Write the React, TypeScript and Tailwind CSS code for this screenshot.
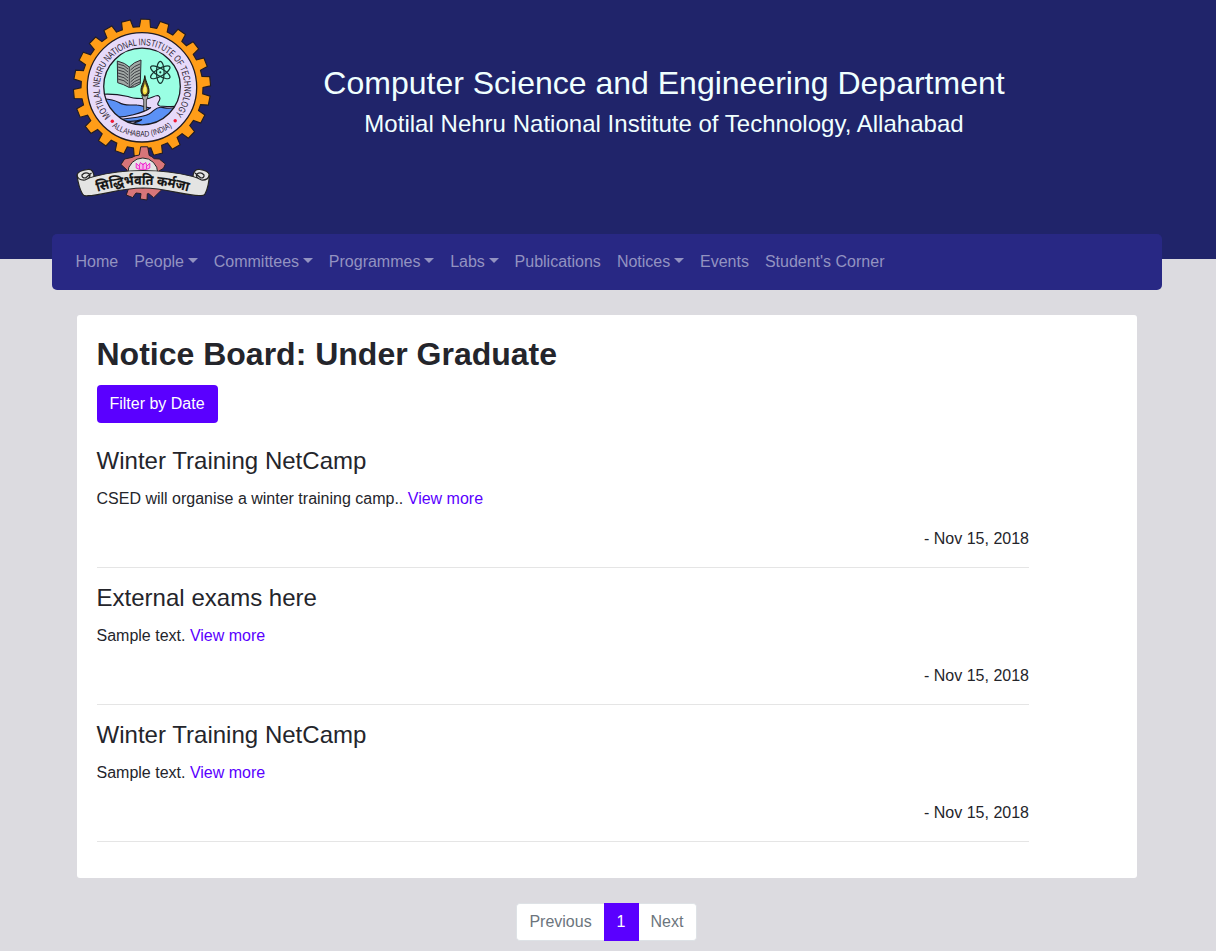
import React from "react";

const menu: { label: string; dropdown?: boolean }[] = [
  { label: "Home" },
  { label: "People", dropdown: true },
  { label: "Committees", dropdown: true },
  { label: "Programmes", dropdown: true },
  { label: "Labs", dropdown: true },
  { label: "Publications" },
  { label: "Notices", dropdown: true },
  { label: "Events" },
  { label: "Student's Corner" },
];

const notices = [
  { title: "Winter Training NetCamp", text: "CSED will organise a winter training camp..", date: "Nov 15, 2018" },
  { title: "External exams here", text: "Sample text.", date: "Nov 15, 2018" },
  { title: "Winter Training NetCamp", text: "Sample text.", date: "Nov 15, 2018" },
];

function gearPath(cx: number, cy: number, inner: number, outer: number, teeth: number, start: number, base: number, tip: number) {
  const points: string[] = [];
  const add = (r: number, deg: number) => {
    const a = (deg * Math.PI) / 180;
    points.push(`${(cx + r * Math.sin(a)).toFixed(2)},${(cy - r * Math.cos(a)).toFixed(2)}`);
  };
  for (let i = 0; i < teeth; i++) {
    const c = start + (i * 360) / teeth;
    add(inner, c - base);
    add(outer, c - tip);
    add(outer, c + tip);
    add(inner, c + base);
  }
  return `M${points.join("L")}Z`;
}

function Crest() {
  return (
    <svg className="block h-[188px] w-[144px]" viewBox="70 16 144 188" fill="none">
      <defs>
        <path id="ringTop" d="M110.8 116.2A42.4 42.4 0 1 1 174.3 115.2" />
        <path id="ringBottom" d="M100.3 113.8A49.4 49.4 0 0 0 183.7 113.8" />
        <path id="motto" d="M97.5 192Q142 177.5 189.5 192" />
        <clipPath id="scene"><circle cx="142" cy="86.5" r="38.3" /></clipPath>
      </defs>
      <path d={gearPath(142, 87.6, 61, 68.6, 22, 2.8, 5.2, 3.8)} fill="#ff9d18" stroke="#211c22" strokeWidth="1.1" />
      <circle cx="142" cy="87.3" r="54.7" fill="#e7dafa" stroke="#211c22" strokeWidth="1.3" />
      <circle cx="142" cy="86.5" r="38.3" fill="#9affe3" />
      <g clipPath="url(#scene)" stroke="#171725" strokeWidth="1.1">
        <path d="M102 94.3C112 93.5 121 95 128 96.5C133 99 139 98.3 146 98.6C151 99 154 95.3 158 95.5C161 97 160 100 158.5 102C156.5 105 159 106.5 163 106.3C170 106.5 176 108 184 104V134H100Z" fill="#e7dafa" />
        <path d="M100 98.6C108 99 114 100 119 102.5C125 106.5 131 104.6 137 105C143 105 147 109 151 107.5C145 112 138 113.5 132 115C127 116.5 122 117.5 116 117C108 112 104 105 100 98.6Z" fill="#5b91f6" />
        <path d="M119 120C128 117.5 141 118.2 149 114C154 111.5 155 107 161 107.2C166 108 171 110 180 106L176 130H124C126 123 137 123.5 142 119.5C132 123 124 121 119 120Z" fill="#5b91f6" />
      </g>
      <circle cx="142" cy="86.5" r="38.3" stroke="#1b1b22" strokeWidth="1.3" />
      <path d="M117.3 61Q125.5 63 129.3 67Q134 62 141 60L140.3 83.7Q134 88 129.3 87.5Q123 84 117.7 82.7Z" fill="#a2a9a6" stroke="#292b31" strokeWidth="1" />
      <path d="M129.3 67V87M118 64Q125 65 128 69M118 67Q125 68 128 72M118 70Q125 71 128 75M118 73Q125 74 128 78M118 76Q125 77 128 81M118 79Q125 80 128 84M130.5 70Q134 66 140 64M130.5 73Q134 69 140 67M130.5 76Q134 72 140 70M130.5 79Q134 75 140 73M130.5 82Q134 78 140 76M130.5 85Q134 81 140 79M130.5 87Q134 84 140 82" stroke="#292b31" strokeWidth=".85" />
      <g stroke="#17352f" strokeWidth="1.2">
        <ellipse cx="160.3" cy="72.3" rx="3.8" ry="11" />
        <ellipse cx="160.3" cy="72.3" rx="3.8" ry="11" transform="rotate(60 160.3 72.3)" />
        <ellipse cx="160.3" cy="72.3" rx="3.8" ry="11" transform="rotate(120 160.3 72.3)" />
        <circle cx="160.3" cy="72.3" r=".5" fill="#17352f" />
      </g>
      <path d="M141.8 95H148.2L147 99.5H146.4V110.5H143.7V99.5H143Z" fill="#aaa" stroke="#222" strokeWidth=".8" />
      <path d="M144.8 75.6C144 83 140.6 86 141 91Q141.5 96 145 96Q149.4 95 149 91C149 86 146 83 144.8 75.6Z" fill="#514321" stroke="#18180d" />
      <path d="M144.8 81C145 86 142.5 88 142.7 91Q143 94.5 145 94.5Q147.5 93.5 147.4 90C147.4 87 145 85 144.8 81Z" fill="#f2df43" />
      <path d="M145 87V92" stroke="#fff9ad" />
      <g fill="#29222f" fontFamily="'Liberation Sans', sans-serif" fontSize="9.6">
        <text>
          <textPath href="#ringTop" textLength="193" lengthAdjust="spacingAndGlyphs">MOTILAL NEHRU NATIONAL INSTITUTE OF TECHNOLOGY</textPath>
        </text>
        <text fontSize="8.2">
          <textPath href="#ringBottom" startOffset="50%" textAnchor="middle" textLength="64" lengthAdjust="spacingAndGlyphs">ALLAHABAD (INDIA)</textPath>
        </text>
      </g>
      <circle cx="112.3" cy="121.2" r="1.7" fill="#f21936" />
      <circle cx="175.2" cy="120.7" r="1.7" fill="#f21936" />
      <path d="M140.7 146.8H147.7L149.2 155.4Q152 156.4 154.2 158.7L159.3 159L165.4 164L163.5 168.3L159 171V187L161.5 190L153.7 197.7L148.7 193.5L147.3 193.8L147 200L140.3 199L141 193.6L136 193L132.7 197.6L126.2 195L128.7 188L127 184V170L121 164.5L124.6 159L132 157.4Q135 155.5 139.3 155Z" fill="#d87579" stroke="#241e25" strokeWidth="1" strokeLinejoin="round" />
      <circle cx="142.8" cy="173" r="15" fill="#e5e5e3" stroke="#252525" />
      <g stroke="#ef2bcf" strokeWidth="1">
        <path d="M136.2 163.2V168Q143 172 149.8 168V163.2L147 166L145.6 162.4L143 165L140.5 162.4L139 166Z" fill="#f4b4e8" />
        <path d="M143 163V170M139.5 166V169M146.5 166V169" />
      </g>
      <g fill="#e4e4e3" stroke="#242424" strokeWidth="1.2" strokeLinejoin="round">
        <path d="M77 175Q78 170.5 88 169.5Q93.5 169 94 176.5Q117 170.5 143 170.5Q169 170.5 193 176.5Q193.5 169 199.5 169.5Q208.5 170.5 209.3 175Q209 186 205 194Q204 196 199 195.5C184 195.5 166 188 143 188C120 188 102 195.5 88 195.7Q84 196.5 82.5 194Q78.5 187 77 175Z" />
        <path d="M77 175Q78 180.5 85 180Q91.5 177.5 89.5 174Q85 171.5 82 175Q81.5 178 85.5 178L91.5 173M94 176.5Q90 177.5 85 180M209.3 175Q208 180.5 201.5 180Q195 177.5 196.8 174Q201 171.5 204 175Q204.5 178 200.8 178L195 173M193 176.5Q196.5 177.5 201.5 180" fill="none" />
      </g>
      <text fill="#151515" stroke="#151515" strokeWidth=".15" fontFamily="'Noto Sans Devanagari', 'Noto Sans', FreeSans, sans-serif" fontWeight="700" fontSize="13.5">
        <textPath href="#motto" textLength="92" lengthAdjust="spacingAndGlyphs">सिद्धिर्भवति कर्मजा</textPath>
      </text>
    </svg>
  );
}

export default function App() {
  return (
    <div className="h-[951px] overflow-hidden bg-[#dcdbe0] font-['Liberation_Sans',Arial,sans-serif] text-base leading-6 text-[#24252b]">
      <header className="flex h-[259px] bg-[#20246a] pl-[70px] pt-4 text-[#f0ffff]">
        <Crest />
        <div className="ml-[65px] w-[770px] pt-12 text-center">
          <h1 className="text-[32px] leading-[38.4px]">Computer Science and Engineering Department</h1>
          <h2 className="mt-[7px] text-2xl leading-[29px] tracking-[0.02px]">Motilal Nehru National Institute of Technology, Allahabad</h2>
        </div>
      </header>

      <nav className="relative -mt-[25px] ml-[52px] flex h-14 w-[1110px] items-center rounded-[5px] bg-[#282884] pl-[15.5px] text-[#9393c1]">
        {menu.map(({ label, dropdown }) => (
          <a key={label} className="whitespace-nowrap px-2 py-2">
            {label}
            {dropdown && <span className="ml-[3.74px] inline-block border-x-[5px] border-t-[5px] border-x-transparent border-t-current align-[4.08px]" />}
          </a>
        ))}
      </nav>

      <main className="ml-[77px] mt-[25px] h-[563px] w-[1060px] rounded-[3px] bg-white pl-[19.5px] pt-5">
        <h2 className="text-[32px] font-bold leading-[38.4px]">Notice Board: Under Graduate</h2>
        <button className="ml-[0.5px] mt-[11.6px] block h-[38px] w-[121px] rounded-[4px] bg-[#5a00ff] pr-px text-white">Filter by Date</button>
        <div className="mt-6 w-[932.5px]">
          {notices.map((notice, i) => (
            <article key={i} className="mb-4 h-[121px] border-b border-[#e5e5e5]">
              <h3 className="text-2xl leading-[28.8px] tracking-[0.02px]">{notice.title}</h3>
              <p className="mt-[11px]">{notice.text} <a className="text-[#5a00ff]">View more</a></p>
              <p className="mt-4 text-right">- {notice.date}</p>
            </article>
          ))}
        </div>
      </main>

      <div className="ml-[516px] mt-[25px] flex h-[38px] w-[181px] overflow-hidden rounded-[4px] text-[#6c757d]">
        <span className="flex w-[88px] items-center justify-center rounded-l-[4px] border border-r-0 border-[#dee2e6] bg-white">Previous</span>
        <span className="flex w-[35px] items-center justify-center bg-[#5a00ff] pr-px text-white">1</span>
        <span className="flex w-[58px] items-center justify-center rounded-r-[4px] border border-l-0 border-[#dee2e6] bg-white pr-px">Next</span>
      </div>
    </div>
  );
}
